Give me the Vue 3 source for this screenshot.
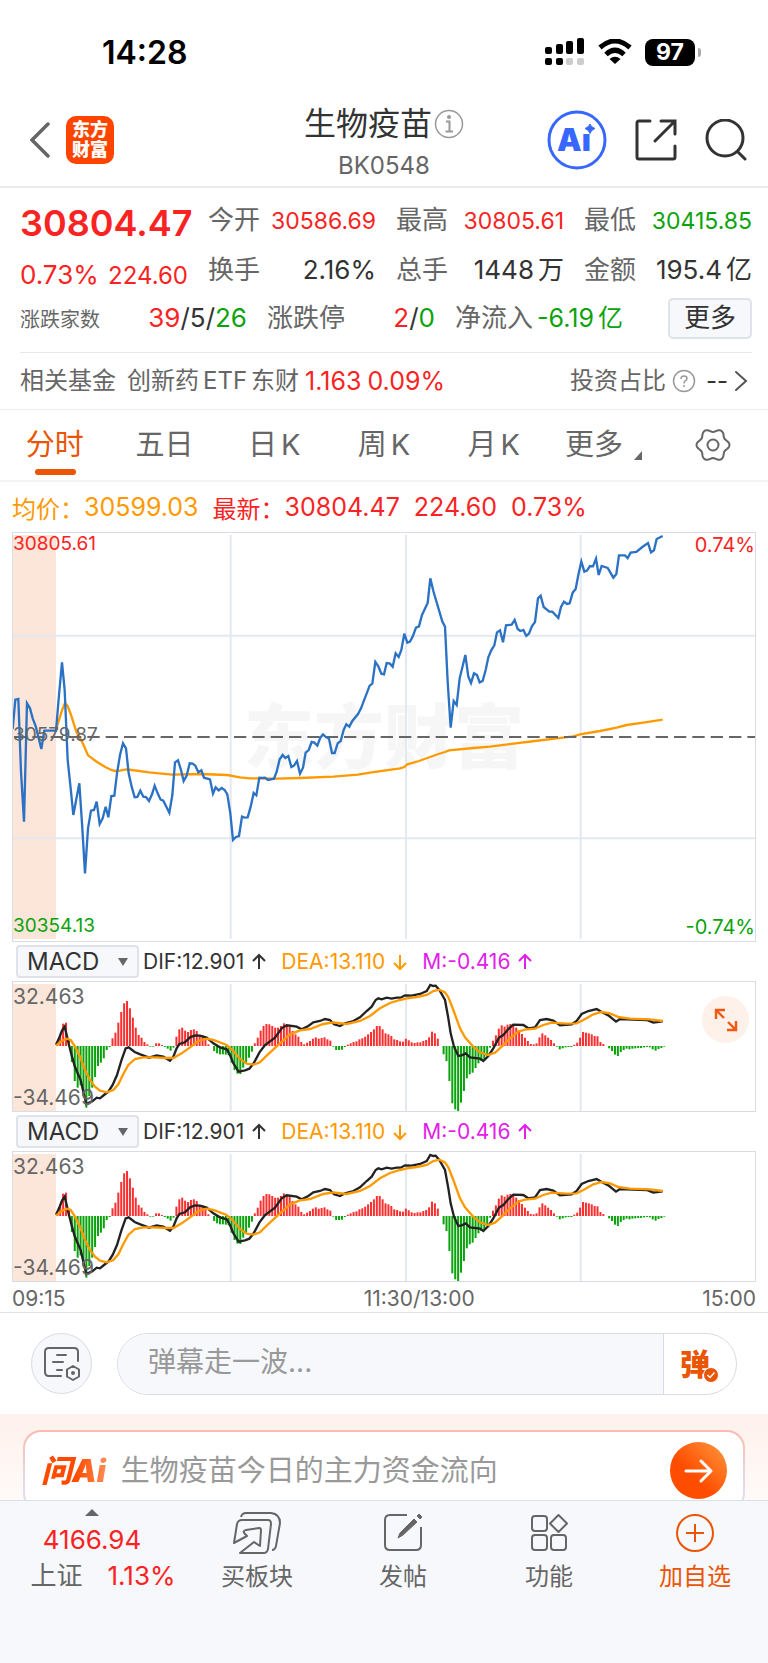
<template>
  <div class="page">
    <div class="statusBar">
      <span class="clock">14:28</span>
      <div class="statusIcons">
        <svg class="signal" viewBox="0 0 40 28">
          <rect x="0" y="9" width="7" height="7" rx="2" />
          <rect x="11" y="6" width="7" height="10" rx="2" />
          <rect x="21" y="3" width="7" height="13" rx="2" />
          <rect x="32" y="0" width="7" height="16" rx="2" />
          <rect x="0" y="20" width="7" height="7" rx="2" />
          <rect x="11" y="20" width="7" height="7" rx="2" />
          <rect x="21" y="20" width="7" height="7" rx="2" fill="#ccc" />
          <rect x="32" y="20" width="7" height="7" rx="2" fill="#ccc" />
        </svg>
        <svg class="wifi" viewBox="0 0 34 26">
          <path d="M2 8.500 Q17 -4.500 32 8.500" fill="none" stroke="#000" stroke-width="5" />
          <path d="M8 15.500 Q17 7 26 15.500" fill="none" stroke="#000" stroke-width="5" />
          <path d="M11.500 20 Q17 15.500 22.500 20 L17 25 Z" />
        </svg>
        <div class="battery">
          <span class="batteryBody">97</span>
          <span class="batteryNub"></span>
        </div>
      </div>
    </div>

    <header class="header">
      <div class="headerSide">
        <button class="iconBtn" aria-label="返回">
          <svg width="20" height="36" viewBox="0 0 20 36">
            <path d="M18 2 L2 18 L18 34" fill="none" stroke="#666" stroke-width="3.500" stroke-linecap="round" />
          </svg>
        </button>
        <a class="brand" href="#">东方<br>财富</a>
      </div>
      <div class="headerTitle">
        <h1>
          生物疫苗
          <svg width="30" height="30" viewBox="0 0 30 30">
            <circle cx="15" cy="15" r="13.500" fill="none" stroke="#999" stroke-width="1.500" />
            <circle cx="15" cy="8" r="2" fill="#999" />
            <path d="M12 12.500 H15.500 V22 M11.500 22.500 H19" fill="none" stroke="#999" stroke-width="2" />
          </svg>
        </h1>
        <div class="code">BK0548</div>
      </div>
      <div class="headerSide right">
        <button class="iconBtn" aria-label="Ai">
          <svg width="60" height="60" viewBox="0 0 60 60">
            <circle cx="30" cy="30" r="28" fill="none" stroke="#3767ff" stroke-width="3" />
            <text x="10" y="41" class="aiText">Ai</text>
            <rect x="36" y="14" width="12" height="10" fill="#fff" />
            <path d="M43 14 Q44 17 48 18.500 Q44 20 43 23.500 Q42 20 38 18.500 Q42 17 43 14 Z" fill="#3767ff" stroke="#3767ff" />
          </svg>
        </button>
        <button class="iconBtn" aria-label="分享">
          <svg width="42" height="42" viewBox="0 0 42 42" fill="none" stroke="#333" stroke-width="3" stroke-linecap="round">
            <path d="M15 2 H4 Q2 2 2 4 V38 Q2 40 4 40 H38 Q40 40 40 38 V27" />
            <path d="M26 2 H40 V15 M39 3 L20 22" />
          </svg>
        </button>
        <button class="iconBtn" aria-label="搜索">
          <svg width="42" height="42" viewBox="0 0 42 42" fill="none" stroke="#333" stroke-width="3" stroke-linecap="round">
            <circle cx="20" cy="19" r="18" />
            <path d="M33 33 L40 40" />
          </svg>
        </button>
      </div>
    </header>

    <section class="quote">
      <div class="quoteGrid">
        <strong class="price red">30804.47</strong>
        <div v-for="item in rowOne" :key="item.label" class="pair">
          <span class="label">{{ item.label }}</span>
          <span class="small" :class="item.color">{{ item.value }}</span>
        </div>
        <div class="change red"><span class="percent">0.73%</span><span>224.60</span></div>
        <div v-for="item in rowTwo" :key="item.label" class="pair">
          <span class="label">{{ item.label }}</span>
          <span class="num">{{ item.value }}<i v-if="item.unit">{{ item.unit }}</i></span>
        </div>
      </div>
      <div class="quoteRow">
        <div class="pair">
          <span class="tiny">涨跌家数</span>
          <span class="num"><b class="red">39</b>/5/<b class="green">26</b></span>
        </div>
        <div class="pair">
          <span class="label">涨跌停</span>
          <span class="num"><b class="red">2</b>/<b class="green">0</b></span>
        </div>
        <div class="pair">
          <div class="flow">
            <span class="label">净流入</span>
            <span class="flowNum green">-6.19<i>亿</i></span>
          </div>
          <button class="moreBtn">更多</button>
        </div>
      </div>
      <div class="fund">
        <div class="fundLeft">
          <span>相关基金</span>
          <a href="#">创新药<i>ETF</i>东财</a>
          <span class="rate red">1.163</span>
          <span class="rate red">0.09%</span>
        </div>
        <div class="fundRight">
          <span>投资占比</span>
          <svg width="24" height="24" viewBox="0 0 24 24" fill="none" stroke="#999">
            <circle cx="12" cy="12" r="10.500" stroke-width="1.500" />
            <path d="M9 10 Q9 7 12 7 Q15 7 15 9.500 Q15 11 13 12 Q12 12.500 12 14.500" stroke-width="1.500" />
            <circle cx="12" cy="17" r="1" fill="#999" stroke="none" />
          </svg>
          <span class="dash">--</span>
          <svg width="14" height="22" viewBox="0 0 14 22">
            <path d="M2 2 L12 11 L2 20" fill="none" stroke="#555" stroke-width="2" stroke-linecap="round" />
          </svg>
        </div>
      </div>
    </section>

    <nav class="tabs">
      <button
        v-for="(tab, i) in tabs"
        :key="tab.name"
        class="tab"
        :class="{ active: activeTab === i }"
        @click="activeTab = i"
      >
        {{ tab.name }}<i v-if="tab.k">K</i>
      </button>
      <button class="tab more">更多<span class="corner"></span></button>
      <button class="tab" aria-label="设置">
        <svg width="36" height="36" viewBox="0 0 36 36" fill="none" stroke="#666" stroke-width="2">
          <path :d="gearPath" stroke-linejoin="round" />
          <circle cx="18" cy="18" r="5.500" />
        </svg>
      </button>
    </nav>

    <div class="averages">
      <span class="orange">均价：</span><span class="orange value">30599.03</span>
      <span class="red">最新：</span><span class="red value">30804.47</span>
      <span class="red value">224.60</span>
      <span class="red value">0.73%</span>
    </div>

    <div class="charts">
      <div class="priceChart">
        <div class="watermark">东方财富</div>
        <svg viewBox="39 24 2226 1224" preserveAspectRatio="none">
          <rect x="39" y="30" width="129" height="1212" fill="#fce6da" />
          <path class="gridLine" d="M692 30 V1242 M1218 30 V1242 M1742 30 V1242 M39 332 H2265 M39 940 H2265" />
          <polyline class="avgLine" :points="avgLine" />
          <path class="midLine" d="M42 636 H2265" />
          <polyline class="priceLine" :points="priceLine" />
        </svg>
        <span class="mark topLeft red">30805.61</span>
        <span class="mark midLeft">30579.87</span>
        <span class="mark bottomLeft green">30354.13</span>
        <span class="mark topRight red">0.74%</span>
        <span class="mark bottomRight green">-0.74%</span>
      </div>

      <template v-for="n in 2" :key="n">
        <div class="macdHead">
          <div class="selectBox">
            <select :aria-label="'指标' + n">
              <option>MACD</option>
            </select>
            <span class="caret"></span>
          </div>
          <span class="dif">DIF:12.901 <Arrow /></span>
          <span class="orange">DEA:13.110 <Arrow down /></span>
          <span class="purple">M:-0.416 <Arrow /></span>
        </div>
        <div class="macdChart">
          <svg viewBox="39 126 2226 387" preserveAspectRatio="none">
            <rect x="39" y="132" width="129" height="381" fill="#fce6da" />
            <path class="gridLine" d="M692 132 V513 M1218 132 V513 M1742 132 V513" />
            <rect
              v-for="bar in bars"
              :key="bar.x"
              :x="bar.x"
              :y="bar.y"
              width="6"
              :height="bar.h"
              :fill="bar.fill"
            />
            <polyline class="difLine" :points="difLine" />
            <polyline class="avgLine" :points="deaLine" />
          </svg>
          <span class="mark macdTop">32.463</span>
          <span class="mark macdBottom">-34.469</span>
          <button v-if="n === 1" class="expand" aria-label="全屏">
            <svg width="24" height="24" viewBox="0 0 24 24" fill="none" stroke="#f0590f" stroke-width="2.400">
              <path d="M2 11 V2 H11 M2 2 L10 10 M13 22 H22 V13 M22 22 L14 14" />
            </svg>
          </button>
        </div>
      </template>

      <div class="axis">
        <span>09:15</span>
        <span>11:30/13:00</span>
        <span>15:00</span>
      </div>
    </div>

    <div class="danmaku">
      <button class="danmakuSet" aria-label="弹幕设置">
        <svg width="38" height="36" viewBox="0 0 38 36" fill="none" stroke="#666" stroke-width="2" stroke-linecap="round">
          <path d="M18 30 H6 Q2 30 2 26 V6 Q2 2 6 2 H31 Q35 2 35 6 V15" />
          <path d="M14 9 H23 M10 16 H20 M14 24 H19" />
          <path d="M30 20 L36 23.500 V30.500 L30 34 L24 30.500 V23.500 Z" stroke-linejoin="round" />
          <circle cx="30" cy="27" r="1" fill="#666" />
        </svg>
      </button>
      <div class="danmakuBox">
        <input type="text" placeholder="弹幕走一波..." aria-label="弹幕">
        <button class="danmakuBtn">
          弹
          <svg width="16" height="16" viewBox="0 0 16 16">
            <circle cx="8" cy="8" r="7.500" fill="#ea5504" stroke="#fff" />
            <path d="M4.500 8 L7 10.500 L11.500 5.500" fill="none" stroke="#fff" stroke-width="1.500" />
          </svg>
        </button>
      </div>
    </div>

    <section class="ask">
      <div class="askCard">
        <span class="askLogo">问Ai</span>
        <span class="askText">生物疫苗今日的主力资金流向</span>
        <button class="askGo" aria-label="提问">
          <svg width="30" height="26" viewBox="0 0 30 26" fill="none" stroke="#fff" stroke-width="3" stroke-linecap="round" stroke-linejoin="round">
            <path d="M2 13 H27 M17 3 L27 13 L17 23" />
          </svg>
        </button>
      </div>
    </section>

    <footer class="bottomBar">
      <a class="index" href="#">
        <span class="up"></span>
        <span class="indexValue red">4166.94</span>
        <span class="indexRow"><span>上证</span><span class="red">1.13%</span></span>
      </a>
      <button class="action">
        <svg width="54" height="48" viewBox="0 0 54 48">
          <path d="M11 8 Q12 4 16 4 H41 Q50 5 50 14 L46 37 Q45 41 42 41" />
          <path d="M4 34 L7 15 Q8 11 12 11 H38 Q41 11 41 15 L38 40 Q37 44 34 44 H10 L24 33 L30 37 L31 21 Q31 19 29 19 L16 21 Q12 22 15 25 L17 27 Z" stroke-linejoin="round" />
        </svg>
        <span>买板块</span>
      </button>
      <button class="action">
        <svg width="54" height="48" viewBox="0 0 54 48">
          <path d="M31 6 H14 Q9 6 9 11 V36 Q9 41 14 41 H40 Q45 41 45 36 V18" />
          <path d="M22 29 L24 24 L38 10 L41 13 L27 26 Z M41 7 L43 5 L46 8 L44 10 Z" fill="#666" stroke-width="1" />
        </svg>
        <span>发帖</span>
      </button>
      <button class="action">
        <svg width="54" height="48" viewBox="0 0 54 48">
          <rect x="10" y="7" width="15" height="15" rx="3" />
          <path d="M36.500 6 L45 14.500 L36.500 23 L28 14.500 Z" stroke-linejoin="round" />
          <rect x="10" y="26" width="15" height="15" rx="3" />
          <rect x="29" y="26" width="15" height="15" rx="3" />
        </svg>
        <span>功能</span>
      </button>
      <button class="action add">
        <svg width="54" height="48" viewBox="0 0 54 48">
          <circle cx="27" cy="24" r="18" />
          <path d="M27 15 V33 M18 24 H36" />
        </svg>
        <span>加自选</span>
      </button>
    </footer>
  </div>
</template>

<script setup>
import { ref, h } from 'vue'

const rowOne = [
  { label: '今开', value: '30586.69', color: 'red' },
  { label: '最高', value: '30805.61', color: 'red' },
  { label: '最低', value: '30415.85', color: 'green' }
]
const rowTwo = [
  { label: '换手', value: '2.16%' },
  { label: '总手', value: '1448', unit: '万' },
  { label: '金额', value: '195.4', unit: '亿' }
]

const tabs = [
  { name: '分时' },
  { name: '五日' },
  { name: '日', k: true },
  { name: '周', k: true },
  { name: '月', k: true }
]
const activeTab = ref(0)

const Arrow = (props) =>
  h('svg', { width: 14, height: 18, viewBox: '0 0 14 18', fill: 'none', stroke: 'currentColor', 'stroke-width': 2 }, [
    h('path', { d: props.down ? 'M7 2 V16 M1 10 L7 16 L13 10' : 'M7 16 V2 M1 8 L7 2 L13 8' })
  ])
Arrow.props = { down: Boolean }

// шестерёнка: окружность с шестью волнами
const gearPath = 'M' + Array.from({ length: 72 }, (_, i) => {
  const a = (i * Math.PI) / 36
  const r = 14.8 + 1.7 * Math.cos(6 * a)
  return (18 + r * Math.cos(a)).toFixed(1) + ' ' + (18 + r * Math.sin(a)).toFixed(1)
}).join('L') + 'Z'

const priceLine = `38,612 46,524 55,522 63,740 72,890 81,535 90,550 98,580 107,603 116,640 124,672 133,617 168,617
177,510 186,412 194,495 203,705 212,790 220,870 238,775 247,910 255,1045 264,910 273,857 282,855 290,830 299,897
308,880 317,845 325,877 334,813 343,812 351,745 360,690 369,655 378,670 386,745 395,785 404,817 412,816 421,797
430,815 438,816 447,828 456,808 464,782 473,805 482,824 490,827 499,845 508,863 517,810 525,712 534,706 543,735
551,768 560,752 569,715 578,716 586,722 595,742 604,736 612,758 630,763 639,806 647,787 656,796 665,789 674,795
682,808 691,865 699,945 708,936 717,933 726,875 734,878 743,877 752,845 761,804 769,811 778,758 787,759 795,758
804,765 822,761 830,740 839,703 848,690 856,699 865,693 874,726 882,722 891,708 900,746 909,728 917,683 926,675
935,651 943,653 952,662 961,638 969,628 978,636 987,641 996,684 1004,684 1013,655 1022,648 1031,615 1039,598
1048,605 1057,588 1074,567 1083,550 1109,482 1117,476 1126,411 1135,424 1144,446 1152,448 1160,414 1170,416
1178,425 1187,385 1196,396 1204,375 1213,326 1222,353 1230,350 1238,335 1248,308 1257,304 1266,270 1283,234
1291,160 1300,198 1327,290 1335,305 1343,470 1352,608 1361,528 1370,540 1379,460 1396,390 1405,455 1413,474
1422,445 1431,450 1439,472 1448,468 1457,435 1465,397 1474,375 1483,361 1491,322 1500,316 1509,352 1518,301
1535,299 1544,285 1553,312 1561,318 1570,315 1579,333 1587,326 1596,303 1605,291 1614,220 1622,212 1631,246
1648,260 1657,260 1675,279 1683,246 1692,230 1701,237 1709,235 1718,203 1727,192 1736,145 1744,110 1753,140
1761,137 1770,123 1779,124 1788,101 1796,150 1805,123 1823,129 1840,158 1849,147 1857,91 1875,91 1883,99
1892,83 1909,81 1927,66 1944,54 1953,82 1962,76 1970,42 1988,33`

const avgLine = `168,614 177,585 186,556 195,534 203,543 212,567 229,620 247,652 264,691 290,710 317,727 334,735 345,738
360,737 378,733 395,735 447,742 517,749 600,747 682,750 720,757 750,760 830,761 900,759 1000,755 1074,749
1110,743 1200,730 1213,726 1222,718 1257,708 1315,687 1335,681 1347,676 1420,669 1470,665 1540,656 1605,648
1670,640 1720,634 1740,628 1800,618 1850,608 1880,600 1930,593 1988,584`

const difLine = `168,314 177,295 186,272 194,260 200,285 207,315 216,350 224,378 233,400 242,420 250,455 259,492 268,488
277,484 290,473 300,475 312,465 325,455 338,435 351,405 364,362 377,325 386,322 404,336 421,343 447,353 470,346
490,350 510,362 520,350 530,325 538,312 555,307 570,292 585,286 600,287 620,293 640,310 660,322 680,328 690,345
700,370 716,395 735,391 748,386 761,370 778,338 795,315 825,293 845,265 860,256 890,260 905,268 925,258 940,247
960,243 975,237 990,240 1002,253 1020,258 1035,250 1060,243 1080,232 1100,213 1115,200 1127,180 1135,175
1145,178 1160,173 1175,176 1190,173 1202,173 1215,166 1235,167 1260,162 1280,153 1291,135 1300,138 1307,137
1318,150 1335,180 1345,235 1352,280 1362,320 1375,348 1385,346 1397,340 1410,352 1440,356 1450,363 1465,348
1480,325 1497,293 1510,285 1525,267 1540,254 1570,255 1585,265 1605,262 1620,240 1640,237 1660,242 1680,256
1715,253 1730,243 1745,222 1765,213 1790,207 1805,216 1825,226 1848,245 1860,237 1940,240 1960,248 1988,244`

const deaLine = `168,317 185,303 200,296 212,300 225,320 240,350 255,390 270,420 285,440 300,452 320,457 340,450 355,433
370,402 385,375 405,357 430,352 460,352 500,354 520,354 545,340 570,322 595,303 620,296 640,300 680,315 700,333
720,357 740,371 760,374 780,367 800,347 840,310 870,283 900,271 930,267 970,252 1000,247 1040,252 1080,243
1110,228 1140,205 1170,189 1200,180 1220,175 1250,171 1280,165 1300,153 1318,149 1335,157 1345,172 1360,210
1380,265 1395,292 1420,320 1440,337 1465,345 1485,338 1505,320 1530,295 1555,275 1575,269 1605,266 1630,255
1655,248 1700,251 1730,250 1750,240 1780,223 1805,216 1830,220 1855,231 1890,236 1950,238 1988,243`

const macd = [
  8, 35, 67, 70, 18, -48, -105, -125, -118, -150, -185, -150, -125, -93, -60, -50, -37, -12, -3, 23, 40, 70, 102,
  128, 135, 113, 85, 55, 33, 25, 12, 5, -2, -2, 8, 8, 3, -3, -8, -14, -5, 28, 50, 55, 46, 42, 48, 50, 45, 33, 32,
  22, 5, 0, -15, -22, -25, -25, -26, -28, -50, -72, -83, -84, -65, -50, -35, -17, 8, 25, 46, 60, 66, 65, 60, 55,
  55, 60, 68, 60, 58, 45, 35, 28, 12, 5, 10, 15, 22, 26, 22, 24, 26, 20, 16, -2, -12, -12, -11, -3, 4, 8, 12, 14,
  20, 23, 28, 35, 42, 50, 60, 60, 50, 38, 35, 30, 20, 18, 14, 13, 22, 17, 11, 9, 11, 11, 15, 18, 26, 43, 38, 22,
  0, -25, -45, -105, -172, -190, -196, -170, -135, -97, -85, -80, -66, -52, -45, -40, -30, -5, 16, 32, 52, 62, 58,
  64, 66, 62, 55, 48, 36, 25, 15, 6, 5, 8, 26, 38, 32, 25, 18, 8, -2, -10, -7, -4, -3, -3, 4, 10, 25, 42, 40, 38,
  35, 30, 29, 12, 6, 0, -7, -15, -26, -30, -18, -12, -8, -10, -8, -7, -6, -6, -4, -3, -4, -10, -14, -9, -6, -2
]
const step = (1993 - 172) / (macd.length - 1)
const bars = macd.map((v, i) => ({
  x: 169 + i * step,
  y: v > 0 ? 318 - v : 318,
  h: Math.abs(v),
  fill: v > 0 ? '#fa2f2f' : '#0ba30b'
}))
</script>

<style>
body {
  background: #fff;
}
</style>

<style scoped>
.page {
  font-family: Inter, "Noto Sans CJK SC", sans-serif;
  color: #333;
  background: #fff;
}
button,
input,
select {
  font-family: inherit;
  color: inherit;
  margin: 0;
  padding: 0;
  border: none;
  background: none;
}
button {
  cursor: pointer;
}
a {
  color: inherit;
  text-decoration: none;
}
i {
  font-style: normal;
}
b {
  font-weight: 400;
}
svg {
  display: block;
  flex-shrink: 0;
}
.red {
  color: #fa2323;
}
.green {
  color: #0ba30b;
}
.orange {
  color: #ff9900;
}
.purple {
  color: #e020e8;
}

.statusBar {
  display: flex;
  justify-content: space-between;
  align-items: center;
  box-sizing: border-box;
  height: 93px;
  padding: 11px 67px 0 102px;
  color: #000;
}
.clock {
  font-size: 32px;
  font-weight: 600;
}
.statusIcons {
  display: flex;
  align-items: center;
  gap: 13px;
}
.signal {
  width: 40px;
  height: 28px;
}
.wifi {
  width: 34px;
  height: 26px;
}
.battery {
  display: flex;
  align-items: center;
  gap: 3px;
}
.batteryBody {
  width: 50px;
  line-height: 27px;
  border-radius: 8px;
  background: #000;
  color: #fff;
  font-size: 23px;
  font-weight: 700;
  text-align: center;
}
.batteryNub {
  width: 3px;
  height: 9px;
  border-radius: 0 3px 3px 0;
  background: #aaa;
}

.header {
  display: grid;
  grid-template-columns: 1fr auto 1fr;
  align-items: center;
  height: 93px;
  padding: 0 21px;
  border-bottom: 2px solid #ececec;
}
.headerSide {
  display: flex;
  align-items: center;
  gap: 16px;
  padding-left: 9px;
}
.headerSide.right {
  justify-content: flex-end;
  gap: 28px;
  padding-left: 0;
}
.brand {
  padding: 4px 6px;
  border-radius: 10px;
  background: #ff4400;
  color: #fff;
  font-size: 18px;
  font-weight: 900;
  line-height: 20px;
}
.headerTitle {
  align-self: end;
  text-align: center;
}
.headerTitle h1 {
  display: flex;
  align-items: center;
  gap: 2px;
  margin: 0;
  font-size: 32px;
  font-weight: 400;
  line-height: 44px;
}
.code {
  color: #666;
  font-size: 24px;
  line-height: 40px;
}
.aiText {
  font-size: 31px;
  font-weight: 900;
  fill: #3767ff;
}

.quote {
  padding: 8px 16px 0 20px;
}
.quoteGrid {
  display: grid;
  grid-template-columns: repeat(4, minmax(0, 1fr));
  grid-auto-rows: 49px;
  column-gap: 20px;
  align-items: center;
}
.pair {
  display: flex;
  justify-content: space-between;
  align-items: baseline;
  line-height: 48px;
  white-space: nowrap;
}
.price {
  align-self: end;
  font-size: 36px;
  font-weight: 600;
  line-height: 44px;
}
.change {
  display: flex;
  align-self: end;
  justify-content: space-between;
  align-items: baseline;
  font-size: 24px;
  line-height: 36px;
}
.label {
  color: #666;
  font-size: 26px;
}
.small {
  font-size: 23px;
}
.num,
.percent {
  font-size: 26px;
}
.num i,
.flowNum i {
  margin-left: 4px;
}
.tiny {
  color: #666;
  font-size: 20px;
}
.quoteRow {
  display: grid;
  grid-template-columns: 227fr 168fr 297fr;
  column-gap: 20px;
  height: 58px;
  border-bottom: 1px solid #e8e8e8;
}
.flow {
  display: flex;
  align-items: baseline;
  gap: 4px;
}
.flowNum {
  font-size: 25px;
}
.moreBtn {
  width: 84px;
  height: 41px;
  border: 2px solid #dfe2e8;
  border-radius: 5px;
  background: #f6f8fb;
  font-size: 26px;
  line-height: 36px;
}
.fund {
  display: flex;
  justify-content: space-between;
  height: 56px;
  color: #666;
  font-size: 24px;
  line-height: 56px;
  white-space: nowrap;
}
.fundLeft,
.fundRight {
  display: flex;
  align-items: center;
  gap: 6px;
}
.fundLeft a {
  margin-left: 5px;
}
.fundLeft i {
  margin: 0 4px;
}
.rate {
  font-size: 25px;
}
.fundRight {
  padding-right: 4px;
}
.dash {
  margin-left: 4px;
  color: #333;
}

.tabs {
  display: grid;
  grid-template-columns: repeat(7, 1fr);
  height: 70px;
  border-top: 1px solid #ececec;
  border-bottom: 2px solid #f4f4f4;
}
.tab {
  position: relative;
  display: flex;
  justify-content: center;
  align-items: center;
  color: #666;
  font-size: 29px;
  line-height: 40px;
  white-space: nowrap;
}
.tab i {
  margin-left: 4px;
}
.tab.active {
  color: #ea5504;
}
.tab.active::after {
  content: "";
  position: absolute;
  bottom: 5px;
  left: 50%;
  width: 41px;
  height: 6px;
  margin-left: -20px;
  border-radius: 3px;
  background: #ea5504;
}
.corner {
  align-self: flex-end;
  margin: 0 0 20px 11px;
  border-left: 8px solid transparent;
  border-bottom: 9px solid #666;
}

.averages {
  display: flex;
  align-items: center;
  height: 50px;
  padding-left: 12px;
  font-size: 24px;
  white-space: nowrap;
}
.value {
  margin-right: 14px;
  font-size: 25px;
}

.charts {
  padding: 0 12px;
  border-bottom: 1px solid #dfe1e6;
}
.priceChart,
.macdChart {
  position: relative;
  border: 1px solid #d9dce4;
}
.priceChart {
  height: 408px;
}
.macdChart {
  height: 129px;
}
.priceChart svg,
.macdChart > svg {
  position: relative;
  width: 100%;
  height: 100%;
}
.watermark {
  position: absolute;
  inset: 0;
  display: flex;
  justify-content: center;
  align-items: center;
  padding-bottom: 10px;
  color: #f6f6f6;
  font-size: 70px;
  font-weight: 900;
}
.gridLine,
.avgLine,
.priceLine,
.midLine,
.difLine {
  fill: none;
  stroke-width: 7;
}
.gridLine {
  stroke: #e4e8f0;
  stroke-width: 6;
}
.avgLine {
  stroke: #ff9900;
}
.priceLine {
  stroke: #2b72c4;
}
.difLine {
  stroke: #222;
}
.midLine {
  stroke: #666;
  stroke-width: 6;
  stroke-dasharray: 37 18;
}
.mark {
  position: absolute;
  color: #666;
  font-size: 19px;
  line-height: 22px;
}
.mark.red {
  color: #fa2323;
}
.mark.green {
  color: #0ba30b;
}
.topLeft {
  top: 0;
  left: 0;
}
.midLeft {
  top: 191px;
  left: 0;
}
.bottomLeft {
  bottom: 4px;
  left: 0;
}
.topRight {
  top: 1px;
  right: 0;
  font-size: 20px;
}
.bottomRight {
  right: 0;
  bottom: 3px;
  font-size: 20px;
}
.macdTop,
.macdBottom {
  left: 0;
  font-size: 21px;
}
.macdTop {
  top: 4px;
}
.macdBottom {
  bottom: 2px;
}
.macdHead {
  display: flex;
  align-items: center;
  gap: 15px;
  height: 39px;
  padding-left: 4px;
  font-size: 21px;
  white-space: nowrap;
}
.macdHead span {
  display: flex;
  align-items: center;
  gap: 8px;
}
.selectBox {
  position: relative;
  margin-right: -11px;
}
.selectBox select {
  width: 123px;
  height: 33px;
  padding-left: 9px;
  border: 2px solid #dfe2e8;
  border-radius: 4px;
  background: #f6f8fb;
  font-size: 24px;
  appearance: none;
}
.selectBox .caret {
  position: absolute;
  top: 13px;
  right: 11px;
  border: 5px solid transparent;
  border-top: 8px solid #666;
  border-bottom: none;
}
.expand {
  position: absolute;
  top: 14px;
  right: 6px;
  display: flex;
  justify-content: center;
  align-items: center;
  width: 47px;
  height: 47px;
  border-radius: 50%;
  background: #fdf1ea;
}
.axis {
  display: grid;
  grid-template-columns: 5fr auto 4fr;
  height: 30px;
  color: #666;
  font-size: 21px;
  line-height: 34px;
}
.axis span:last-child {
  text-align: right;
}

.danmaku {
  display: flex;
  align-items: center;
  gap: 25px;
  height: 101px;
  padding: 0 31px;
}
.danmakuSet {
  display: flex;
  flex-shrink: 0;
  justify-content: center;
  align-items: center;
  width: 61px;
  height: 61px;
  border: 1px solid #d9dce4;
  border-radius: 50%;
  background: #f6f8fb;
}
.danmakuBox {
  display: flex;
  flex: 1;
  height: 60px;
  overflow: hidden;
  border: 1px solid #d9dce4;
  border-radius: 31px;
}
.danmakuBox input {
  flex: 1;
  min-width: 0;
  padding: 0 0 4px 30px;
  background: #f6f8fb;
  font-size: 28px;
}
.danmakuBox input::placeholder {
  color: #999;
}
.danmakuBtn {
  position: relative;
  width: 73px;
  padding-right: 10px;
  border-left: 1px solid #d9dce4;
  color: #ea5504;
  font-size: 30px;
  font-weight: 900;
  line-height: 54px;
}
.danmakuBtn svg {
  position: absolute;
  right: 17px;
  bottom: 11px;
}

.ask {
  height: 70px;
  padding: 16px 23px 0;
  overflow: hidden;
  background: linear-gradient(#fff1ec, #fffaf8);
}
.askCard {
  display: flex;
  align-items: center;
  height: 77px;
  padding: 0 16px;
  border: 2px solid transparent;
  border-radius: 18px;
  background: linear-gradient(#fff, #fff) padding-box, linear-gradient(#ffb9ad, #e0dced 70%) border-box;
}
.askLogo {
  padding-right: 4px;
  background: linear-gradient(90deg, #ff4a00 50%, #ff9560);
  background-clip: text;
  color: transparent;
  font-size: 31px;
  font-style: italic;
  font-weight: 900;
  line-height: 40px;
}
.askText {
  flex: 1;
  margin-left: 11px;
  color: #999;
  font-size: 29px;
  line-height: 40px;
}
.askGo {
  display: flex;
  justify-content: center;
  align-items: center;
  width: 57px;
  height: 57px;
  border-radius: 50%;
  background: linear-gradient(45deg, #ff4d00 40%, #ff9a40);
}

.bottomBar {
  display: grid;
  grid-template-columns: 184fr 146fr 146fr 146fr 146fr;
  height: 164px;
  border-top: 1px solid #dcdfe5;
  background: #f6f8fb;
  color: #666;
}
.index {
  display: flex;
  flex-direction: column;
  align-items: center;
  padding-top: 8px;
  font-size: 26px;
}
.up {
  border: 7px solid transparent;
  border-top: none;
  border-bottom: 7px solid #666;
}
.indexValue {
  margin-top: 8px;
  line-height: 32px;
}
.indexRow {
  display: flex;
  gap: 25px;
  padding-left: 22px;
  line-height: 40px;
}
.action {
  display: flex;
  flex-direction: column;
  align-items: center;
  padding-top: 8px;
  font-size: 24px;
  line-height: 40px;
}
.action svg {
  fill: none;
  stroke: #666;
  stroke-width: 2;
}
.action.add {
  color: #ea5504;
}
.action.add svg {
  stroke: #ea5504;
}
</style>
